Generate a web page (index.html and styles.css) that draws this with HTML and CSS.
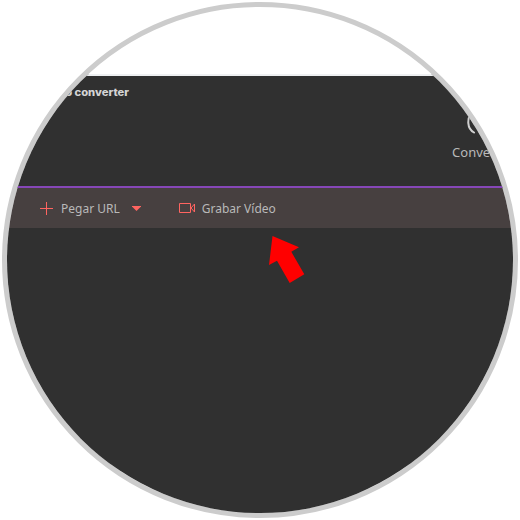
FILE: index.html
```html
<!DOCTYPE html>
<html lang="es">
<head>
<meta charset="UTF-8">
<meta name="viewport" content="width=device-width, initial-scale=1.0">
<title>Video converter</title>
<link rel="stylesheet" href="styles.css">
</head>
<body>

<div class="lens">
    <header class="header">
        <div class="brand">video converter</div>
        <div class="tab">
            <svg class="tab-icon" width="28" height="24" viewBox="0 0 28 24">
                <path d="M7 20.5C-.2 16.5-.3 6 5 1M21 20.5C28.2 16.5 28.3 6 23 1" fill="none" stroke="#d0d0d0" stroke-width="2" stroke-linecap="round"/>
            </svg>
            <span>Convertir</span>
        </div>
    </header>

    <div class="toolbar">
        <div class="tool">
            <svg class="plus" width="13" height="13" viewBox="0 0 13 13">
                <path d="M0 6.5h13M6.5 0v13" stroke="#ff6460" stroke-width="1"/>
            </svg>
            <span class="paste-label">Pegar URL</span>
            <svg class="caret" width="9" height="5" viewBox="0 0 9 5">
                <path d="M0 0h9v.6L4.5 5 0 .6z" fill="#ff6460"/>
            </svg>
        </div>
        <div class="tool">
            <svg class="camera" width="16" height="10" viewBox="0 0 16 10">
                <path d="M.5 .5h11v9H.5zM12 5l3.5-4v8z" fill="none" stroke="#ff6460"/>
            </svg>
            <span class="record-label">Grabar Vídeo</span>
        </div>
    </div>

    <main class="content">
        <svg class="pointer" width="36" height="48" viewBox="0 0 36 48">
            <path d="M3.5 0L30 11.3 22.3 15.8 35.3 38.3 20.7 47 8 24.7 0 29z" fill="#ff0000"/>
        </svg>
    </main>
</div>

</body>
</html>
```
FILE: styles.css
```css
* {
    box-sizing: border-box;
}

body {
    font-family: "Noto Sans", "Open Sans", sans-serif;
    font-size: 12px;
    color: #b9b9b9;
    margin: 0;
    padding: 2px;
    background-color: #fff;
}

/* Round frame */
.lens {
    display: flex;
    flex-direction: column;
    width: 516px;
    height: 516px;
    padding-top: 67px;
    border: 5px solid #ccc;
    border-radius: 50%;
    overflow: hidden;
}

/* Header */
.header {
    display: flex;
    justify-content: space-between;
    height: 114px;
    border-top: 2px solid #eef0f2;
    border-bottom: 2px solid #8647b8;
    background-color: #303030;
}

.brand {
    width: 122px;
    margin-top: 9px;
    font-family: Inter, sans-serif;
    font-size: 10px;
    font-weight: 800;
    line-height: 14px;
    text-align: right;
    color: #d4d4d4;
    transform: scaleX(1.12);
    transform-origin: right;
}

.tab {
    display: flex;
    flex-direction: column;
    align-items: center;
    width: 65px;
    margin-top: 36px;
    font-size: 13px;
    line-height: 18px;
}

.tab-icon {
    margin-bottom: 7px;
}

/* Toolbar */
.toolbar {
    display: flex;
    gap: 38px;
    height: 40px;
    padding-left: 33px;
    background-color: #474040;
}

.tool {
    display: flex;
    align-items: center;
}

.paste-label {
    margin: 0 12px 0 8px;
}

.record-label {
    margin-left: 7px;
}

/* Content */
.content {
    flex: 1;
    padding: 8px 0 0 262px;
    background-color: #303030;
}

.pointer {
    display: block;
}
```
